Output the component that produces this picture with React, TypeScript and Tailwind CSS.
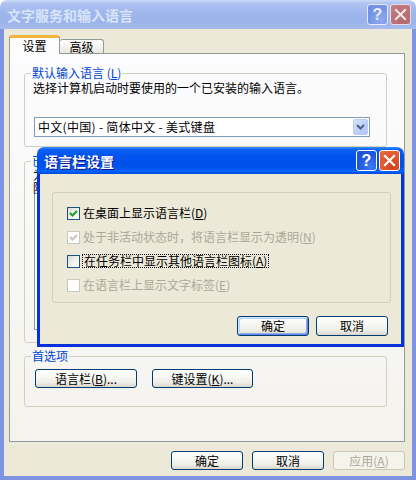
import React from "react";

const U = ({ children }: { children: React.ReactNode }) => (
  <span className="underline underline-offset-[1px]">{children}</span>
);

function XPButton({
  children,
  className = "",
  disabled = false,
  isDefault = false,
}: {
  children: React.ReactNode;
  className?: string;
  disabled?: boolean;
  isDefault?: boolean;
}) {
  if (disabled) {
    return (
      <div
        className={`flex items-center justify-center rounded-[3px] border border-[#C9C7BA] bg-[#F5F4EA] text-[12px] leading-[14px] text-[#ACA899] ${className}`}
      >
        {children}
      </div>
    );
  }
  return (
    <div
      className={`flex items-center justify-center rounded-[3px] border border-[#003C74] bg-[linear-gradient(180deg,#FFFFFF_0%,#F7F7F4_40%,#EEEDE6_75%,#D9D6CB_100%)] text-[12px] leading-[14px] text-black ${
        isDefault
          ? "shadow-[inset_1px_1px_0_0_#CEE7FF,inset_-1px_-1px_0_0_#6982EE,inset_2px_2px_0_0_#BCD4F6,inset_-2px_-2px_0_0_#89ADE4]"
          : ""
      } ${className}`}
    >
      {children}
    </div>
  );
}

function Group({
  label,
  className = "",
  innerClassName = "",
  children,
}: {
  label: React.ReactNode;
  className?: string;
  innerClassName?: string;
  children: React.ReactNode;
}) {
  return (
    <fieldset className={`min-w-0 rounded-[3px] border border-[#D0D0BF] ${className}`}>
      <legend className="ml-[6px] px-[1px] text-[12px] leading-[14px] text-[#0046D5]">{label}</legend>
      <div className={innerClassName}>{children}</div>
    </fieldset>
  );
}

function CheckBox({ checked, disabled }: { checked: boolean; disabled?: boolean }) {
  return (
    <div
      className={`flex h-[13px] w-[13px] shrink-0 items-center justify-center border ${
        disabled
          ? "border-[#CAC8BB] bg-white"
          : "border-[#1C5180] bg-[linear-gradient(135deg,#DCDCD7_0%,#F4F4F0_60%,#FFFFFF_100%)]"
      }`}
    >
      {checked && (
        <svg width="11" height="11" viewBox="0 0 11 11">
          <polyline
            points="2,5 4.5,7.5 9,3"
            fill="none"
            stroke={disabled ? "#CAC8BB" : "#21A121"}
            strokeWidth="2.2"
          />
        </svg>
      )}
    </div>
  );
}

function HelpBtn({ active }: { active: boolean }) {
  return (
    <div
      className={`flex h-[21px] w-[21px] items-center justify-center rounded-[3px] border ${
        active
          ? "border-white bg-[radial-gradient(circle_at_70%_80%,#3C7BF5_0%,#2258E0_55%,#1A4FD8_100%)]"
          : "border-[#E4EBFA] bg-[radial-gradient(circle_at_70%_80%,#8EA9EE_0%,#7594E4_60%,#6F8EE2_100%)]"
      }`}
    >
      <span
        className={`font-['Liberation_Sans',sans-serif] text-[16px] font-bold leading-none ${
          active ? "text-white" : "text-[#E8EEFB]"
        }`}
      >
        ?
      </span>
    </div>
  );
}

function CloseBtn({ active }: { active: boolean }) {
  return (
    <div
      className={`flex h-[21px] w-[21px] items-center justify-center rounded-[3px] border ${
        active
          ? "border-white bg-[radial-gradient(circle_at_70%_80%,#CC4520_0%,#E2582C_50%,#E96B45_100%)]"
          : "border-[#E4DDE8] bg-[radial-gradient(circle_at_70%_80%,#B3676F_0%,#BE7478_60%,#C48185_100%)]"
      }`}
    >
      <svg width="13" height="13" viewBox="0 0 13 13">
        <path
          d="M2 2 L11 11 M11 2 L2 11"
          stroke={active ? "#FFFFFF" : "#EFE3E6"}
          strokeWidth="2.2"
          strokeLinecap="square"
        />
      </svg>
    </div>
  );
}

export default function App() {
  return (
    <div className="relative h-[480px] w-[416px] bg-white font-['Noto_Sans_CJK_SC','Liberation_Sans',sans-serif] text-[12px] text-black">
      {/* Outer (inactive) window */}
      <div className="flex h-full w-full flex-col">
        <div className="flex h-[29px] items-center rounded-t-[7px] bg-[linear-gradient(180deg,#CBD8F7_0%,#AFC3F1_12%,#A1B8ED_40%,#9BB3EB_75%,#A6BCEF_100%)] pl-[7px] pr-[5px]">
          <span className="text-[14px] font-bold leading-none text-[#D8E4F8]">文字服务和输入语言</span>
          <div className="ml-auto flex gap-[2px]">
            <HelpBtn active={false} />
            <CloseBtn active={false} />
          </div>
        </div>
        <div className="flex flex-1 flex-col border-x-4 border-b-4 border-[#7F93E3] bg-[#ECE9D8]">
          <div className="flex flex-col pl-[5px] pr-[7px] pt-[6px]">
            {/* tabs */}
            <div className="flex h-[18px] items-end">
              <div className="relative z-10 -mb-px flex h-[19px] w-[51px] items-start justify-center rounded-t-[3px] border-x border-t-[3px] border-x-[#919B9C] border-t-[#F3B33D] bg-[#FCFCFE] pt-[1px]">
                <span className="leading-[14px]">设置</span>
              </div>
              <div className="flex h-[14px] w-[44px] items-center justify-center rounded-t-[3px] border-r border-t border-[#919B9C] bg-[linear-gradient(180deg,#FFFFFF_0%,#F3F2EC_60%,#E9E7DF_100%)]">
                <span className="leading-[14px]">高级</span>
              </div>
            </div>
            {/* panel */}
            <div className="flex h-[389px] flex-col border border-[#919B9C] bg-[linear-gradient(180deg,#FCFCFE_0%,#F4F3EE_100%)] pl-[14px] pr-[17px]">
              <Group
                className="mt-[12px]"
                innerClassName="pb-[9px] pl-[8px]"
                label={
                  <>
                    默认输入语言 (<U>L</U>)
                  </>
                }
              >
                <div className="mt-[1px] leading-[14px]">选择计算机启动时要使用的一个已安装的输入语言。</div>
                <div className="ml-[1px] mt-[22px] flex h-[20px] w-[336px] items-center border border-[#7F9DB9] bg-white pl-[3px]">
                  <span className="leading-[14px] tracking-[0.3px]">中文(中国) - 简体中文 - 美式键盘</span>
                  <div className="ml-auto mr-[1px] flex h-[16px] w-[15px] items-center justify-center rounded-[2px] border border-[#BBCBF5] bg-[linear-gradient(135deg,#D6E2FC_0%,#C0D2FA_50%,#AFC4F5_100%)]">
                    <svg width="11" height="8" viewBox="0 0 11 8">
                      <polyline points="2,2 5.5,5.5 9,2" fill="none" stroke="#4D6185" strokeWidth="2" />
                    </svg>
                  </div>
                </div>
              </Group>

              <Group
                className="mt-[7px]"
                innerClassName="pb-[12px] pl-[8px] pr-[8px]"
                label={
                  <>
                    已安装的服务(<U>I</U>)
                  </>
                }
              >
                <div className="leading-[13px]">
                  为列表中显示的每个输入语言选择服务。使用“添加”和“删除”按钮来修改这个列表。
                </div>
                <div className="ml-[1px] mt-[-1px] h-[137px] w-[250px] border border-[#7F9DB9] bg-white" />
              </Group>

              <Group className="mt-[6px]" innerClassName="pb-[18px] pl-[10px]" label="首选项">
                <div className="mt-[6px] flex gap-[15px]">
                  <XPButton className="h-[19px] w-[102px]">
                    语言栏(<U>B</U>)...
                  </XPButton>
                  <XPButton className="h-[19px] w-[101px]">
                    键设置(<U>K</U>)...
                  </XPButton>
                </div>
              </Group>
            </div>
          </div>
          <div className="mt-[9px] flex justify-end gap-[9px] pr-[7px]">
            <XPButton className="h-[19px] w-[72px]">确定</XPButton>
            <XPButton className="h-[19px] w-[72px]">取消</XPButton>
            <XPButton disabled className="h-[19px] w-[72px]">
              应用(<U>A</U>)
            </XPButton>
          </div>
        </div>
      </div>

      {/* Active dialog on top */}
      <div className="absolute left-[37px] top-[147px] flex h-[200px] w-[367px] flex-col">
        <div className="flex h-[27px] items-center rounded-t-[7px] bg-[linear-gradient(180deg,#3E8FFA_0%,#0A61F0_10%,#0053EE_35%,#0050EA_70%,#0062FA_90%,#0049DA_100%)] pl-[7px] pr-[4px]">
          <span className="text-[14px] font-bold leading-none text-white [text-shadow:1px_1px_#0F1B89]">语言栏设置</span>
          <div className="ml-auto flex gap-[2px]">
            <HelpBtn active />
            <CloseBtn active />
          </div>
        </div>
        <div className="flex flex-1 flex-col border-x-[3px] border-b-[3px] border-[#0831D9] bg-[#ECE9D8] pl-[12px] pr-[10px] pt-[18px]">
          <div className="flex h-[111px] flex-col rounded-[3px] border border-[#D0D0BF] pl-[14px] pt-[8px]">
            <div className="flex h-[24px] items-center gap-[3px]">
              <CheckBox checked />
              <span className="leading-[14px]">
                在桌面上显示语言栏(<U>D</U>)
              </span>
            </div>
            <div className="flex h-[24px] items-center gap-[3px]">
              <CheckBox checked disabled />
              <span className="leading-[14px] text-[#ACA899]">
                处于非活动状态时，将语言栏显示为透明(<U>N</U>)
              </span>
            </div>
            <div className="flex h-[24px] items-center gap-[2px]">
              <CheckBox checked={false} />
              <span className="border border-dotted border-black px-[1px] leading-[12px]">
                在任务栏中显示其他语言栏图标(<U>A</U>)
              </span>
            </div>
            <div className="flex h-[24px] items-center gap-[3px]">
              <CheckBox checked={false} disabled />
              <span className="leading-[14px] text-[#ACA899]">
                在语言栏上显示文字标签(<U>E</U>)
              </span>
            </div>
          </div>
          <div className="mt-[13px] flex justify-end gap-[7px] pr-[3px]">
            <XPButton isDefault className="h-[20px] w-[72px]">
              确定
            </XPButton>
            <XPButton className="h-[20px] w-[72px]">取消</XPButton>
          </div>
        </div>
      </div>
    </div>
  );
}
